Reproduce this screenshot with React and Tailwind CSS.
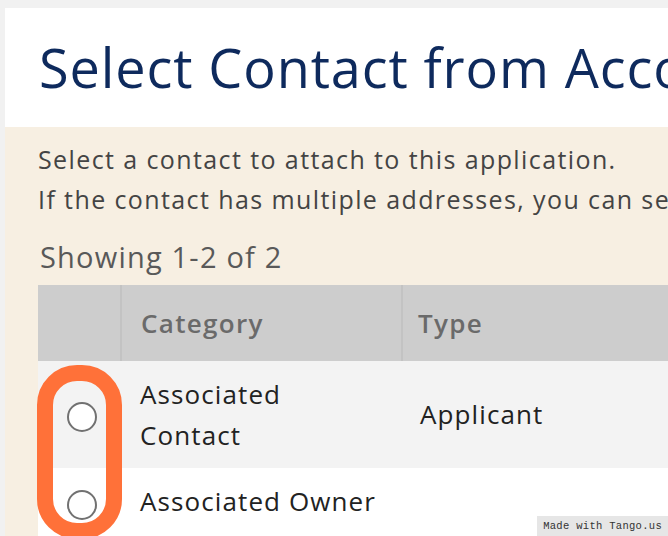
export default function App() {
  const font = { fontFamily: "'Open Sans', Lato, sans-serif" };
  return (
    <div className="relative w-[668px] h-[536px] overflow-hidden bg-[#f1f1f1] pt-[8px] pl-[5px]" style={font}>
      {/* page title bar */}
      <div className="h-[119px] bg-white pl-[34px] pt-[28px]">
        <h1 className="whitespace-nowrap text-[54px] font-medium leading-[62px] tracking-[0.9px] text-[#0e2a5d]">Select Contact from Account</h1>
      </div>

      {/* content area */}
      <div className="h-[420px] bg-[#f7efe2] pl-[33px] pt-[12px]">
        <p className="whitespace-nowrap text-[25px] leading-[40px] tracking-[1.4px] text-[#444444]">Select a contact to attach to this application.</p>
        <p className="whitespace-nowrap text-[25px] leading-[40px] tracking-[1.4px] text-[#444444]">If the contact has multiple addresses, you can select one below.</p>
        <p className="mt-[17px] whitespace-nowrap pl-[2px] text-[29px] leading-[42px] tracking-[1.2px] text-[#595959]">Showing 1-2 of 2</p>

        <div className="mt-[7px] w-[800px]">
          {/* header row */}
          <div className="flex h-[76px] bg-[#cdcdcd] text-[26px] font-semibold tracking-[1.3px] text-[#6a6a6a]">
            <div className="w-[84px] border-r-2 border-[#c3c3c3]" />
            <div className="flex w-[281px] items-center border-r-2 border-[#c3c3c3] pl-[19px]">Category</div>
            <div className="flex flex-1 items-center pl-[15px]">Type</div>
          </div>
          {/* row 1 */}
          <div className="flex h-[107px] bg-[#f3f3f3] text-[26px] tracking-[1.1px] text-[#222222]">
            <div className="flex w-[84px] items-center justify-center pt-[5px]">
              <span className="ml-[4px] block h-[30px] w-[30px] rounded-full border-2 border-[#717171] bg-white" />
            </div>
            <div className="flex w-[281px] flex-col justify-center pl-[18px] leading-[41px]">
              <span>Associated</span>
              <span>Contact</span>
            </div>
            <div className="flex flex-1 items-center pl-[17px]">Applicant</div>
          </div>
          {/* row 2 */}
          <div className="flex h-[90px] bg-white text-[26px] tracking-[1.1px] text-[#222222]">
            <div className="flex w-[84px] justify-center pt-[22px]">
              <span className="ml-[4px] block h-[30px] w-[30px] rounded-full border-2 border-[#717171] bg-white" />
            </div>
            <div className="w-[281px] pl-[18px] pt-[13px] leading-[41px]">Associated Owner</div>
            <div className="flex-1" />
          </div>
        </div>
      </div>

      {/* highlight around the selection radios */}
      <div className="absolute left-[37px] top-[365px] h-[174px] w-[85px] rounded-[40px] border-[16px] border-[#ff7139]" />

      <div className="absolute bottom-0 right-0 bg-[#e6e6e6] px-[6px] py-[2px] text-[10.5px] leading-[16px] tracking-[0.3px] text-[#333333]" style={{ fontFamily: "'Liberation Mono', 'DejaVu Sans Mono', monospace" }}>
        Made with Tango.us
      </div>
    </div>
  );
}
